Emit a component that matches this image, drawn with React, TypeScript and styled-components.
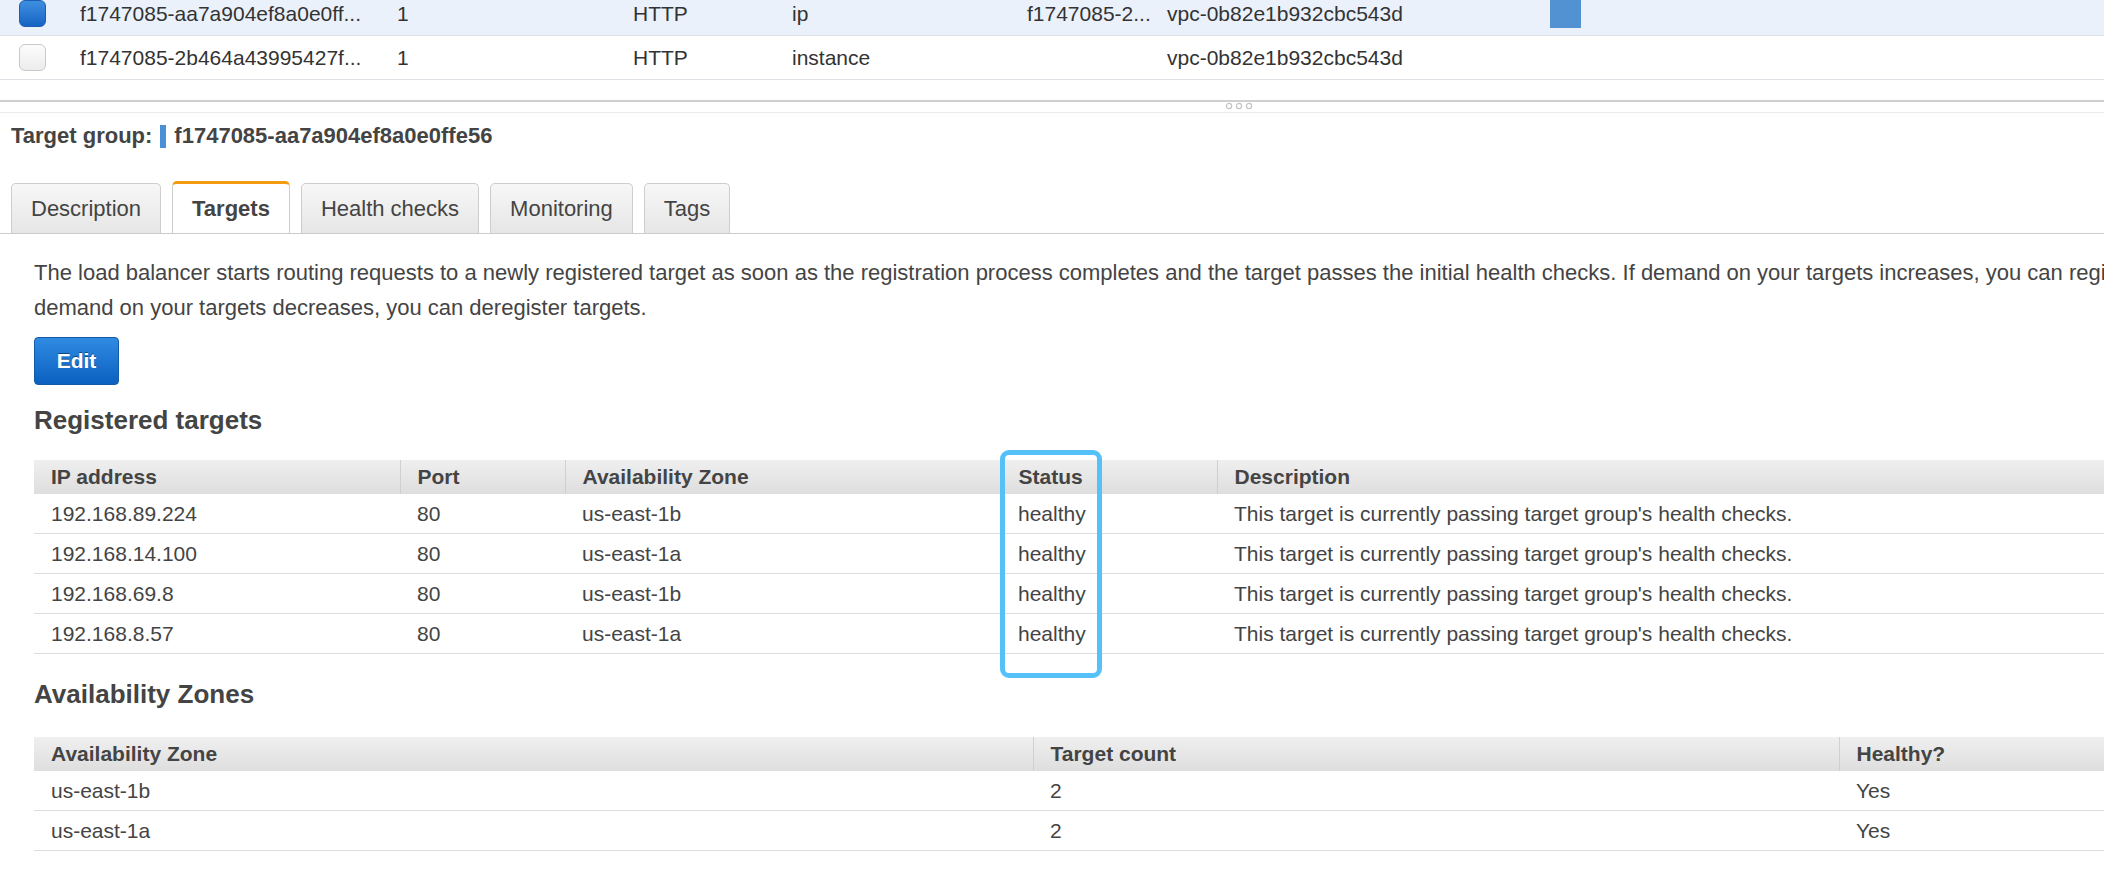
import React from "react";
import styled, { createGlobalStyle } from "styled-components";

const GlobalStyle = createGlobalStyle`
  body {
    margin: 0;
    background: #fff;
    color: #444;
    font-family: "Liberation Sans", Arial, Helvetica, sans-serif;
    overflow: hidden;
  }
`;

const Page = styled.div`
  width: 2104px;
  height: 888px;
  overflow: hidden;
  font-size: 21px;
`;

/* ---------- top list of target groups ---------- */

const GroupList = styled.div`
  margin-top: -8px;
`;

const GroupRow = styled.div<{ $selected?: boolean }>`
  display: grid;
  grid-template-columns: 80px 317px 236px 159px 235px 140px 383px 1fr;
  align-items: center;
  height: 43px;
  border-bottom: 1px solid #dde1e6;
  background: ${(p) => (p.$selected ? "#eaf1fb" : "#fff")};
  color: #333;
  white-space: nowrap;
`;

const CheckCell = styled.div`
  padding-left: 19px;
  display: flex;
  align-items: center;
`;

const Check = styled.span<{ $checked?: boolean }>`
  width: 27px;
  height: 27px;
  border-radius: 6px;
  box-sizing: border-box;
  border: 1px solid ${(p) => (p.$checked ? "#1b5fb3" : "#c9c9c9")};
  background: ${(p) =>
    p.$checked
      ? "linear-gradient(#3f8fe0, #1664c3)"
      : "linear-gradient(#fcfcfc, #ececec)"};
`;

const MarkBar = styled.span`
  display: block;
  width: 31px;
  height: 36px;
  align-self: start;
  background: #5292d3;
`;

const Splitter = styled.div`
  margin-top: 20px;
  height: 10px;
  border-top: 2px solid #cfcfcf;
  border-bottom: 1px solid #ebebeb;
  display: flex;
  justify-content: center;
  padding-left: 374px;
  box-sizing: content-box;
`;

/* ---------- detail panel ---------- */

const GroupTitle = styled.div`
  display: flex;
  align-items: center;
  height: 46px;
  padding-left: 11px;
  font-weight: bold;
  font-size: 22px;
  color: #444;
`;

const TitleBar = styled.span`
  width: 6px;
  height: 23px;
  background: #4a90d6;
  margin: 0 8px 0 8px;
`;

const TabBar = styled.div`
  display: flex;
  gap: 11px;
  padding: 24px 0 0 11px;
  border-bottom: 1px solid #cccccc;
`;

const Tab = styled.div<{ $active?: boolean }>`
  padding: 0 19px;
  display: flex;
  align-items: center;
  box-sizing: border-box;
  border: 1px solid #cdcdcd;
  border-bottom: none;
  border-radius: 5px 5px 0 0;
  font-size: 22px;
  margin-bottom: ${(p) => (p.$active ? "-1px" : "0")};
  background: ${(p) =>
    p.$active ? "#fff" : "linear-gradient(#f7f7f7, #e6e6e6)"};
  border-top: ${(p) => (p.$active ? "3px solid #f39c12" : "1px solid #cdcdcd")};
  height: ${(p) => (p.$active ? "52px" : "50px")};
  margin-top: ${(p) => (p.$active ? "-2px" : "0")};
  font-weight: ${(p) => (p.$active ? "bold" : "normal")};
  color: #444;
`;

const Content = styled.div`
  padding-left: 34px;
`;

const Intro = styled.p`
  margin: 21px 0 0;
  line-height: 35px;
  white-space: nowrap;
  font-size: 22px;
`;

const EditButton = styled.button`
  margin-top: 12px;
  width: 85px;
  height: 48px;
  border-radius: 4px;
  border: 1px solid #155aa8;
  background: linear-gradient(#2f8be2, #0b60c0);
  color: #fff;
  font-family: inherit;
  font-weight: bold;
  font-size: 21px;
  text-shadow: 0 -1px 0 rgba(0, 0, 0, 0.45);
`;

const SectionTitle = styled.h3<{ $gap?: number }>`
  margin: ${(p) => p.$gap ?? 19}px 0 0;
  font-size: 26px;
  line-height: 32px;
  font-weight: bold;
  color: #444;
`;

const TableWrap = styled.div<{ $gap?: number }>`
  position: relative;
  margin-top: ${(p) => p.$gap ?? 26}px;
`;

const Table = styled.table`
  width: 100%;
  border-collapse: collapse;
  table-layout: fixed;
  font-size: 21px;
`;

const Th = styled.th<{ $w?: number }>`
  box-sizing: border-box;
  width: ${(p) => (p.$w ? `${p.$w}px` : "auto")};
  height: 34px;
  padding: 0 17px;
  text-align: left;
  font-weight: bold;
  color: #444;
  white-space: nowrap;
  background: linear-gradient(#efefef, #dedede);
  border-left: 1px solid #d0d0d0;
  &:first-child {
    border-left: none;
  }
`;

const Td = styled.td`
  height: 39px;
  padding: 0 17px;
  border-bottom: 1px solid #dddddd;
  color: #444;
  white-space: nowrap;
`;

const Highlight = styled.div`
  position: absolute;
  left: 966px;
  top: -10px;
  width: 102px;
  height: 228px;
  box-sizing: border-box;
  border: 5px solid #56c1f8;
  border-radius: 9px;
  pointer-events: none;
`;

const Dots = () => (
  <svg width="28" height="8" viewBox="0 0 28 8">
    {[4, 14, 24].map((cx) => (
      <circle key={cx} cx={cx} cy="4" r="2.6" fill="none" stroke="#c4c4c4" strokeWidth="1.2" />
    ))}
  </svg>
);

const targets = [
  ["192.168.89.224", "80", "us-east-1b"],
  ["192.168.14.100", "80", "us-east-1a"],
  ["192.168.69.8", "80", "us-east-1b"],
  ["192.168.8.57", "80", "us-east-1a"],
];

const zones = [
  ["us-east-1b", "2", "Yes"],
  ["us-east-1a", "2", "Yes"],
];

const App = () => {
  return (
    <Page>
      <GlobalStyle />
      <GroupList>
        <GroupRow $selected>
          <CheckCell>
            <Check $checked />
          </CheckCell>
          <span>f1747085-aa7a904ef8a0e0ff...</span>
          <span>1</span>
          <span>HTTP</span>
          <span>ip</span>
          <span>f1747085-2...</span>
          <span>vpc-0b82e1b932cbc543d</span>
          <MarkBar />
        </GroupRow>
        <GroupRow>
          <CheckCell>
            <Check />
          </CheckCell>
          <span>f1747085-2b464a43995427f...</span>
          <span>1</span>
          <span>HTTP</span>
          <span>instance</span>
          <span></span>
          <span>vpc-0b82e1b932cbc543d</span>
          <span></span>
        </GroupRow>
      </GroupList>

      <Splitter>
        <Dots />
      </Splitter>

      <GroupTitle>
        Target group:
        <TitleBar />
        f1747085-aa7a904ef8a0e0ffe56
      </GroupTitle>

      <TabBar>
        <Tab>Description</Tab>
        <Tab $active>Targets</Tab>
        <Tab>Health checks</Tab>
        <Tab>Monitoring</Tab>
        <Tab>Tags</Tab>
      </TabBar>

      <Content>
        <Intro>
          The load balancer starts routing requests to a newly registered target as soon as the
          registration process completes and the target passes the initial health checks. If demand
          on your targets increases, you can register additional targets. If
          <br />
          demand on your targets decreases, you can deregister targets.
        </Intro>

        <EditButton>Edit</EditButton>

        <SectionTitle>Registered targets</SectionTitle>
        <TableWrap $gap={24}>
          <Table>
            <thead>
              <tr>
                <Th $w={366}>IP address</Th>
                <Th $w={165}>Port</Th>
                <Th $w={436}>Availability Zone</Th>
                <Th $w={216}>Status</Th>
                <Th>Description</Th>
              </tr>
            </thead>
            <tbody>
              {targets.map(([ip, port, zone]) => (
                <tr key={ip}>
                  <Td>{ip}</Td>
                  <Td>{port}</Td>
                  <Td>{zone}</Td>
                  <Td>healthy</Td>
                  <Td>This target is currently passing target group's health checks.</Td>
                </tr>
              ))}
            </tbody>
          </Table>
          <Highlight />
        </TableWrap>

        <SectionTitle $gap={24}>Availability Zones</SectionTitle>
        <TableWrap $gap={27}>
          <Table>
            <thead>
              <tr>
                <Th $w={999}>Availability Zone</Th>
                <Th $w={806}>Target count</Th>
                <Th>Healthy?</Th>
              </tr>
            </thead>
            <tbody>
              {zones.map(([zone, count, ok]) => (
                <tr key={zone}>
                  <Td>{zone}</Td>
                  <Td>{count}</Td>
                  <Td>{ok}</Td>
                </tr>
              ))}
            </tbody>
          </Table>
        </TableWrap>
      </Content>
    </Page>
  );
};

export default App;
